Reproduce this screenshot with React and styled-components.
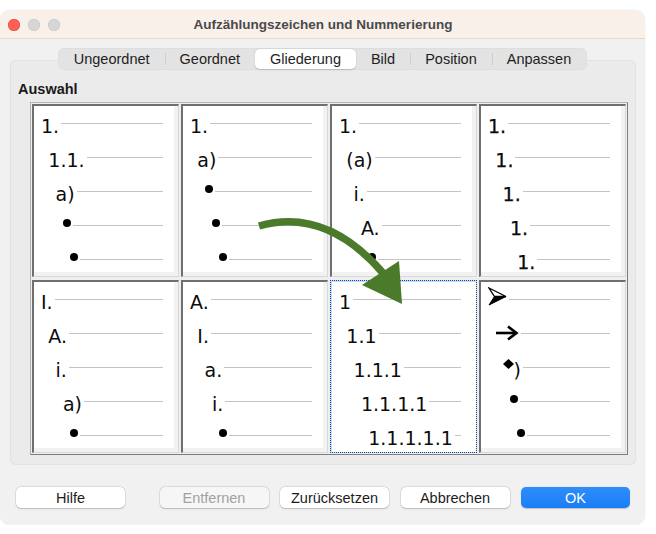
import React from "react";
import styled, { createGlobalStyle } from "styled-components";

const tabs = ["Ungeordnet", "Geordnet", "Gliederung", "Bild", "Position", "Anpassen"];
const activeTab = 2;

// one entry per preview cell, five rows each
const cells = [
  [{ t: "1." }, { t: "1.1." }, { t: "a)" }, { b: true }, { b: true }],
  [{ t: "1." }, { t: "a)" }, { b: true }, { b: true }, { b: true }],
  [{ t: "1." }, { t: "(a)" }, { t: "i." }, { t: "A." }, { b: true }],
  [{ t: "1.", heavy: true }, { t: "1.", heavy: true }, { t: "1.", heavy: true }, { t: "1.", heavy: true }, { t: "1.", heavy: true }],
  [{ t: "I." }, { t: "A." }, { t: "i." }, { t: "a)" }, { b: true }],
  [{ t: "A." }, { t: "I." }, { t: "a." }, { t: "i." }, { b: true }],
  [{ t: "1" }, { t: "1.1" }, { t: "1.1.1" }, { t: "1.1.1.1" }, { t: "1.1.1.1.1" }],
  [{ icon: "head" }, { icon: "arrow" }, { icon: "diamond" }, { b: true }, { b: true }],
];
const selected = 6;

const ArrowHead = () => (
  <svg width="19" height="19" viewBox="0 0 19 19">
    <path d="M1 1 L18 9.5 L6.5 9.5 Z" fill="#fff" stroke="#000" strokeWidth="1.3" strokeLinejoin="miter" />
    <path d="M6.5 9.5 L18 9.5 L1 18 Z" fill="#000" stroke="#000" strokeWidth="1" />
  </svg>
);

const BoldArrow = () => (
  <svg width="24" height="16" viewBox="0 0 24 16">
    <path d="M1 8 H21" stroke="#000" strokeWidth="2.6" />
    <path d="M13 1.5 L21.5 8 L13 14.5" fill="none" stroke="#000" strokeWidth="2.6" />
  </svg>
);

const Diamond = () => (
  <svg width="11" height="10" viewBox="0 0 11 10">
    <path d="M5.5 0 L11 5 L5.5 10 L0 5 Z" fill="#000" />
  </svg>
);

const GreenArrow = () => (
  <Overlay width="598" height="354" viewBox="0 0 598 354">
    <path d="M228 123 Q 295 104 352 170" fill="none" stroke="#4b7a2b" strokeWidth="7.5" />
    <path d="M331 182 L368 158 L371 201 Z" fill="#4b7a2b" />
  </Overlay>
);

function Item({ item, level }) {
  let mark;
  if (item.b) mark = <Bullet />;
  else if (item.icon === "head") mark = <IconBox $top={-5}><ArrowHead /></IconBox>;
  else if (item.icon === "arrow") mark = <IconBox $top={-1}><BoldArrow /></IconBox>;
  else if (item.icon === "diamond")
    mark = (
      <>
        <IconBox $top={-1}><Diamond /></IconBox>
        <Label>)</Label>
      </>
    );
  else mark = <Label $heavy={item.heavy}>{item.t}</Label>;
  return (
    <Row $level={level}>
      {mark}
      <Rule />
    </Row>
  );
}

export default function App() {
  return (
    <>
      <Global />
      <Window>
        <TitleBar>
          <Lights>
            <Light $c="#fe5f57" $b="#e0443e" />
            <Light $c="#d6d6d6" $b="#c4c4c4" />
            <Light $c="#d6d6d6" $b="#c4c4c4" />
          </Lights>
          <Title>Aufzählungszeichen und Nummerierung</Title>
        </TitleBar>

        <TabBar>
          {tabs.map((t, i) => (
            <Tab key={t} $active={i === activeTab} $sep={i > 0 && i !== activeTab && i - 1 !== activeTab}>
              {t}
            </Tab>
          ))}
        </TabBar>

        <Panel>
          <Heading>Auswahl</Heading>
          <Grid>
            {cells.map((rows, ci) => (
              <Cell key={ci} $selected={ci === selected}>
                {rows.map((it, ri) => (
                  <Item key={ri} item={it} level={ri} />
                ))}
              </Cell>
            ))}
            <GreenArrow />
          </Grid>
        </Panel>

        <Footer>
          <Button>Hilfe</Button>
          <Spacer />
          <Button disabled>Entfernen</Button>
          <Button>Zurücksetzen</Button>
          <Button>Abbrechen</Button>
          <Button $primary>OK</Button>
        </Footer>
      </Window>
    </>
  );
}

const Global = createGlobalStyle`
  html, body {
    margin: 0;
    background: #ffffff;
    font-family: "Liberation Sans", Arial, sans-serif;
  }
`;

const Window = styled.div`
  margin-top: 10px;
  width: 645px;
  height: 515px;
  background: #f1f1f1;
  border-radius: 10px;
  overflow: hidden;
  display: flex;
  flex-direction: column;
  box-shadow: 0 0 0 0.5px rgba(0, 0, 0, 0.06);
`;

const TitleBar = styled.div`
  height: 28px;
  flex: none;
  background: #f9f0ea;
  border-bottom: 1px solid #dedad7;
  display: flex;
  align-items: center;
  position: relative;
`;

const Lights = styled.div`
  display: flex;
  gap: 8px;
  padding-left: 8px;
  position: absolute;
  left: 0;
  top: 9px;
`;

const Light = styled.span`
  width: 12px;
  height: 12px;
  border-radius: 50%;
  background: ${(p) => p.$c};
  box-shadow: inset 0 0 0 0.5px ${(p) => p.$b};
`;

const Title = styled.div`
  flex: 1;
  text-align: center;
  font-weight: bold;
  font-size: 13.5px;
  color: #4a4a4a;
  padding-left: 1px;
`;

const TabBar = styled.div`
  align-self: center;
  margin-top: 9px;
  height: 22px;
  display: flex;
  align-items: center;
  background: #e3e3e3;
  border-radius: 6px;
  position: relative;
  z-index: 1;
  padding: 0 1px;
  box-shadow: inset 0 0 0 0.5px rgba(0, 0, 0, 0.04);
`;

const Tab = styled.div`
  height: 20px;
  line-height: 20px;
  padding: 0 15px;
  font-size: 14.5px;
  color: #1e1e1e;
  position: relative;
  border-radius: 5px;
  background: ${(p) => (p.$active ? "#ffffff" : "transparent")};
  box-shadow: ${(p) => (p.$active ? "0 0.5px 1.5px rgba(0,0,0,0.18)" : "none")};
  &::before {
    content: "";
    display: ${(p) => (p.$sep ? "block" : "none")};
    position: absolute;
    left: 0;
    top: 4px;
    height: 12px;
    width: 1px;
    background: #cdcdcd;
  }
`;

const Panel = styled.div`
  margin: -10px 9px 0 10px;
  height: 405px;
  box-sizing: border-box;
  padding: 20px 8px 10px 8px;
  background: #ebebeb;
  border-radius: 6px;
  box-shadow: inset 0 0 0 1px #e2e2e2;
`;

const Heading = styled.div`
  font-weight: bold;
  font-size: 14.5px;
  line-height: 18px;
  color: #1a1a1a;
  margin-bottom: 4px;
`;

const Grid = styled.div`
  position: relative;
  margin-left: 12px;
  width: fit-content;
  display: grid;
  grid-template-columns: repeat(4, 147px);
  grid-auto-rows: 173px;
  gap: 3px 2px;
  padding: 1px;
  background: #efefef;
  border: 1px solid #b4b4b4;
  border-right-color: #7d7d7d;
  border-bottom-color: #7d7d7d;
`;

const Cell = styled.div`
  box-sizing: border-box;
  background: #ffffff;
  border-top: 2px solid ${(p) => (p.$selected ? "#c2dbf7" : "#6f6f6f")};
  border-left: 2px solid ${(p) => (p.$selected ? "#c2dbf7" : "#6f6f6f")};
  border-right: 1px solid ${(p) => (p.$selected ? "#c2dbf7" : "#d8d8d8")};
  border-bottom: 1px solid ${(p) => (p.$selected ? "#c2dbf7" : "#d8d8d8")};
  outline: ${(p) => (p.$selected ? "1px dotted #22458a" : "none")};
  outline-offset: -1px;
  box-shadow: ${(p) => (p.$selected ? "none" : "inset -4px -4px 0 #f2f2f2")};
  padding: 10px 15px 0 7px;
  display: flex;
  flex-direction: column;
  gap: 14px;
`;

const Row = styled.div`
  height: 20px;
  display: flex;
  align-items: flex-start;
  padding-left: ${(p) => p.$level * 7.3}px;
`;

const Label = styled.span`
  font-family: "DejaVu Sans", sans-serif;
  font-size: 19px;
  line-height: 20px;
  color: #0c0c0c;
  white-space: nowrap;
  -webkit-text-stroke: ${(p) => (p.$heavy ? "0.25px #000" : "0")};
`;

const Bullet = styled.span`
  flex: none;
  width: 8px;
  height: 8px;
  margin-top: 1px;
  border-radius: 50%;
  background: #000;
`;

const IconBox = styled.span`
  flex: none;
  display: flex;
  margin-top: ${(p) => p.$top}px;
`;

const Rule = styled.span`
  flex: 1;
  height: 1px;
  margin-top: 7px;
  margin-left: 2px;
  background: #c4c4c4;
`;

const Overlay = styled.svg`
  position: absolute;
  left: 0;
  top: 0;
  pointer-events: none;
`;

const Footer = styled.div`
  margin-top: 22px;
  padding: 0 15px 0 16px;
  display: flex;
  gap: 11.5px;
`;

const Spacer = styled.div`
  flex: 1;
`;

const Button = styled.button`
  width: 109px;
  height: 21px;
  padding: 0;
  border: none;
  border-radius: 5px;
  font-family: "Liberation Sans", Arial, sans-serif;
  font-size: 14.5px;
  color: ${(p) => (p.disabled ? "#a2a2a2" : p.$primary ? "#ffffff" : "#1c1c1c")};
  background: ${(p) =>
    p.$primary ? "linear-gradient(#2f8dfb, #1a7ef7)" : p.disabled ? "#f6f6f6" : "#ffffff"};
  box-shadow: ${(p) =>
    p.$primary
      ? "0 0.5px 1px rgba(0,0,0,0.2)"
      : "0 0 0 0.5px rgba(0,0,0,0.12), 0 0.5px 1.5px rgba(0,0,0,0.18)"};
`;
